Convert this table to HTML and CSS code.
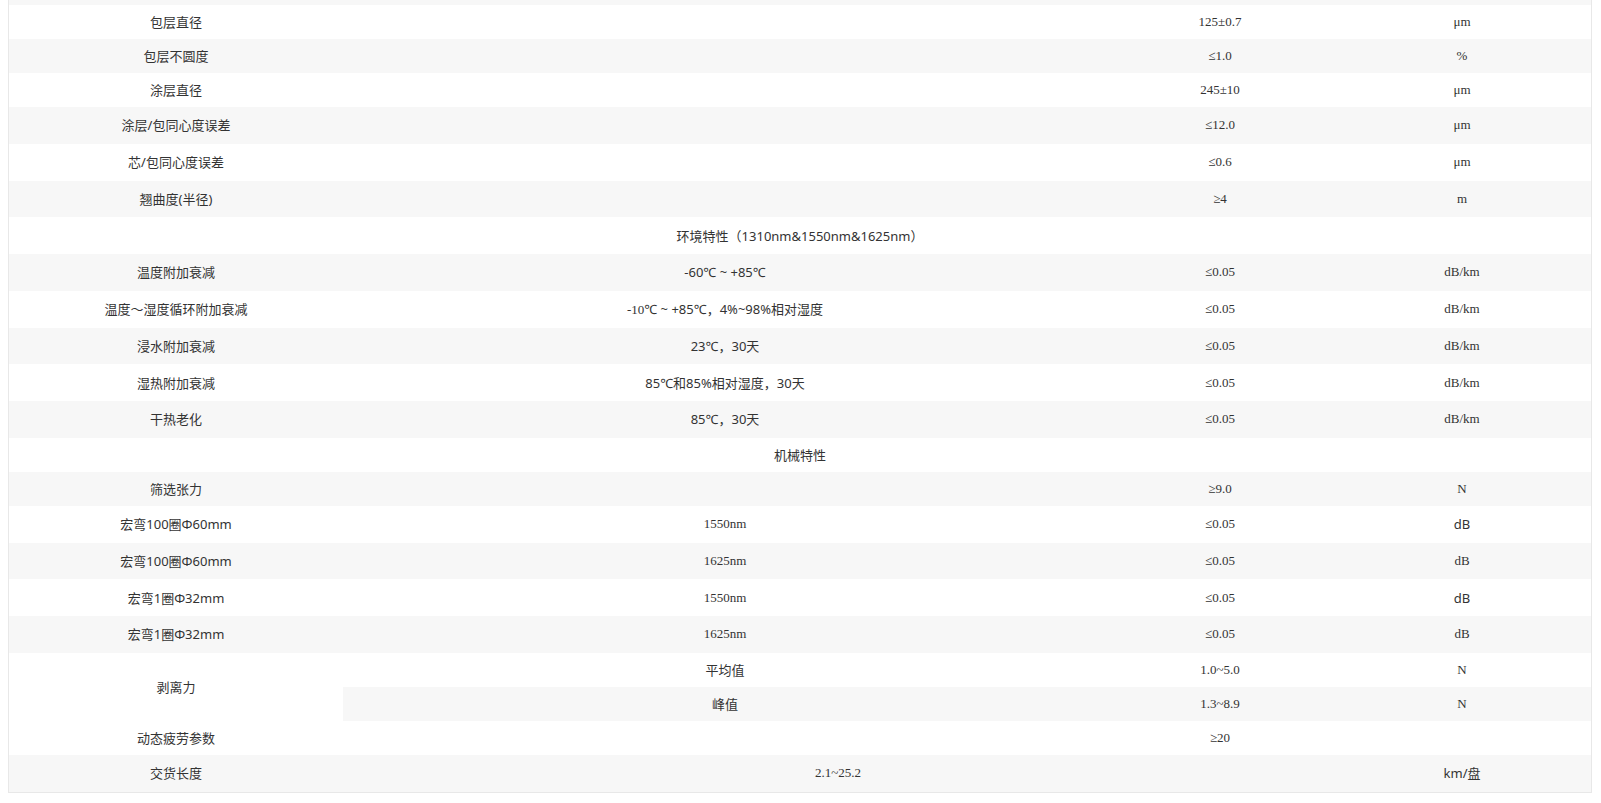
FILE: index.html
```html
<!DOCTYPE html>
<html lang="zh-CN">
<head>
<meta charset="utf-8">
<title>光纤参数</title>
<link rel="stylesheet" href="styles.css">
</head>
<body>
<table class="spec">
  <colgroup>
    <col class="c1"><col class="c2"><col class="c3"><col class="c4">
  </colgroup>
  <tbody>
    <tr class="cut"><td></td><td></td><td></td><td></td></tr>
    <tr><td>包层直径</td><td></td><td class="num">125±0.7</td><td class="num">μm</td></tr>
    <tr><td>包层不圆度</td><td></td><td class="num">≤1.0</td><td class="num">%</td></tr>
    <tr><td>涂层直径</td><td></td><td class="num">245±10</td><td class="num">μm</td></tr>
    <tr class="tall"><td class="yh">涂层/包同心度误差</td><td></td><td class="num">≤12.0</td><td class="num">μm</td></tr>
    <tr class="tall"><td class="yh">芯/包同心度误差</td><td></td><td class="num">≤0.6</td><td class="num">μm</td></tr>
    <tr class="tall"><td class="yh">翘曲度(半径)</td><td></td><td class="num">≥4</td><td class="num">m</td></tr>
    <tr class="tall"><td colspan="4" class="yh">环境特性（1310nm&amp;1550nm&amp;1625nm）</td></tr>
    <tr class="tall"><td>温度附加衰减</td><td class="yh">-60℃ ~ +85℃</td><td class="num">≤0.05</td><td class="num">dB/km</td></tr>
    <tr class="tall"><td>温度～湿度循环附加衰减</td><td class="yh"><span class="num">-10</span>℃ ~ +85℃，4%~98%相对湿度</td><td class="num">≤0.05</td><td class="num">dB/km</td></tr>
    <tr class="tall"><td>浸水附加衰减</td><td class="yh">23℃，30天</td><td class="num">≤0.05</td><td class="num">dB/km</td></tr>
    <tr class="tall"><td>湿热附加衰减</td><td class="yh">85℃和85%相对湿度，30天</td><td class="num">≤0.05</td><td class="num">dB/km</td></tr>
    <tr class="tall"><td>干热老化</td><td class="yh">85℃，30天</td><td class="num">≤0.05</td><td class="num">dB/km</td></tr>
    <tr><td colspan="4">机械特性</td></tr>
    <tr><td>筛选张力</td><td></td><td class="num">≥9.0</td><td class="num">N</td></tr>
    <tr class="tall"><td class="yh">宏弯100圈Φ60mm</td><td class="num">1550nm</td><td class="num">≤0.05</td><td class="yh">dB</td></tr>
    <tr class="tall"><td class="yh">宏弯100圈Φ60mm</td><td class="num">1625nm</td><td class="num">≤0.05</td><td class="num">dB</td></tr>
    <tr class="tall"><td class="yh">宏弯1圈Φ32mm</td><td class="num">1550nm</td><td class="num">≤0.05</td><td class="yh">dB</td></tr>
    <tr class="tall"><td class="yh">宏弯1圈Φ32mm</td><td class="num">1625nm</td><td class="num">≤0.05</td><td class="num">dB</td></tr>
    <tr><td rowspan="2">剥离力</td><td>平均值</td><td class="num">1.0~5.0</td><td class="num">N</td></tr>
    <tr><td>峰值</td><td class="num">1.3~8.9</td><td class="num">N</td></tr>
    <tr><td>动态疲劳参数</td><td></td><td class="num">≥20</td><td></td></tr>
    <tr class="tall"><td>交货长度</td><td colspan="2" class="num">2.1~25.2</td><td class="yh">km/盘</td></tr>
  </tbody>
</table>
</body>
</html>
```

FILE: styles.css
```css
html, body {
  background: #ffffff;
}

body {
  margin: 0 8px;
  color: #333333;
  font-family: "Noto Sans CJK SC", "Noto Sans", sans-serif;
  font-size: 13px;
}

.spec {
  width: 1584px;
  table-layout: fixed;
  border-collapse: separate;
  border-spacing: 0;
  border: 1px solid #e8e8e8;
  border-top: 0;
}

.c1 { width: 334px; }
.c2 { width: 764px; }
.c3 { width: 226px; }
.c4 { width: 258px; }

.spec tr {
  height: 34px;
}

.spec tr.tall {
  height: 36.75px;
}

.spec tr.cut {
  height: 5px;
}

.spec td {
  padding: 0;
  line-height: 16px;
  text-align: center;
  vertical-align: middle;
  background: #ffffff;
}

.spec tr:nth-child(odd) td {
  background: #f7f7f7;
}

.spec tr.cut td {
  line-height: 0;
}

.spec .num {
  font-family: "Liberation Serif", "Noto Sans CJK SC", serif;
}

.spec .yh {
  font-family: "Noto Sans", "Noto Sans CJK SC", sans-serif;
}
```
